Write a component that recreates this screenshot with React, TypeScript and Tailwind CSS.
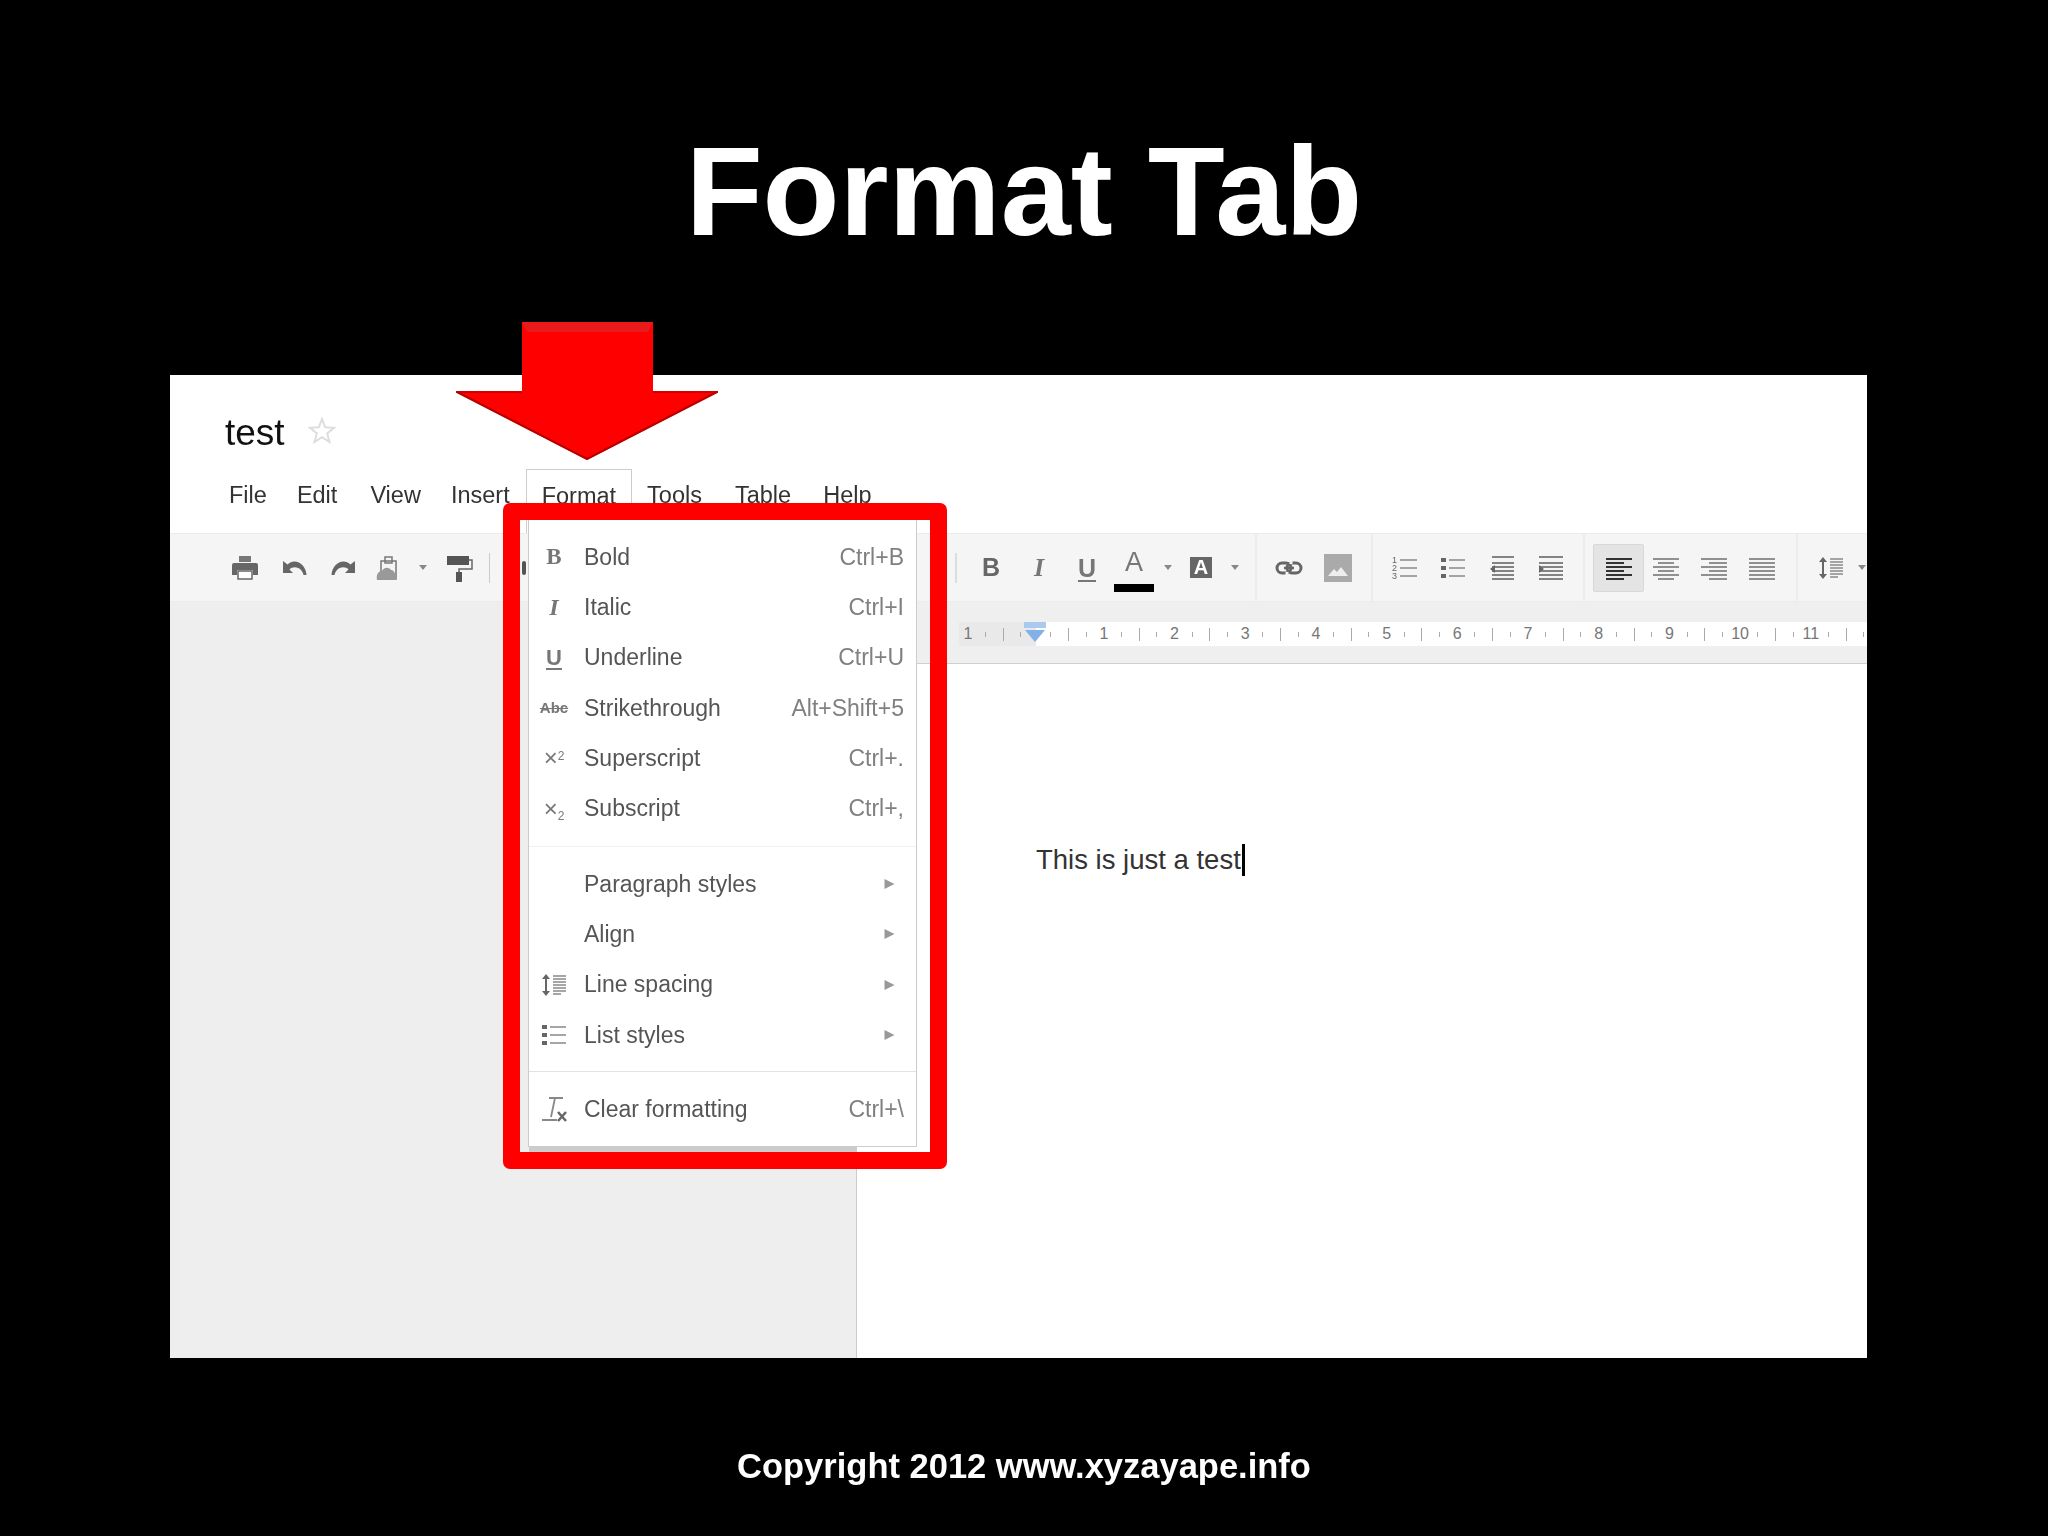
import React from "react";

const Ico = ({ children, className = "" }: { children: React.ReactNode; className?: string }) => (
  <svg viewBox="0 0 28 28" className={`w-[28px] h-[28px] shrink-0 block ${className}`} fill="#666">
    {children}
  </svg>
);

const Dd = ({ className = "" }: { className?: string }) => (
  <svg viewBox="0 0 10 6" className={`w-[10px] h-[6px] shrink-0 ${className}`}>
    <path d="M1 0h8L5 5z" fill="#888" />
  </svg>
);

const Sep = ({ className = "" }: { className?: string }) => <div className={`w-[2px] shrink-0 ${className}`} />;

const lines = (ys: number[], x1: number, x2: number, color = "#777", w = 2) =>
  ys.map((y) => <path key={y} d={`M${x1} ${y}H${x2}`} stroke={color} strokeWidth={w} fill="none" />);

const Undo = ({ flip = false }: { flip?: boolean }) => (
  <Ico>
    <path
      transform={flip ? "translate(28 0) scale(-1 1)" : undefined}
      d="M2 9v10h10l-3.5-3.5C11 12.500 17 12.500 20 16c1.300 1.500 2 3 2.500 5h3C25 13 19.500 7.500 13.500 7.500 11 7.500 8.500 8.500 6.500 10.500L2 7z"
    />
  </Ico>
);

const LineSpacing = () => (
  <Ico>
    <path d="M6 3l-4 5h3v12H2l4 5 4-5H7V8h3z" fill="#666" />
    {lines([5, 8, 11, 14, 17, 20], 13, 26, "#888", 1.500)}
    <path d="M13 23h8" stroke="#888" strokeWidth={1.500} />
  </Ico>
);

const BulletList = () => (
  <Ico>
    <rect x="2" y="4" width="5" height="4" fill="#666" />
    <rect x="2" y="12" width="5" height="4" fill="#666" />
    <rect x="2" y="20" width="5" height="4" fill="#666" />
    {lines([6, 14, 22], 10, 26, "#888", 1.500)}
  </Ico>
);

const Ticks = () => (
  <>
    <div className="w-[17.675px] flex justify-center"><div className="w-px h-[5px] bg-[#aaa]" /></div>
    <div className="w-[17.675px] flex justify-center"><div className="w-px h-[13px] bg-[#aaa]" /></div>
    <div className="w-[17.675px] flex justify-center"><div className="w-px h-[5px] bg-[#aaa]" /></div>
  </>
);

const Inch = ({ label }: { label: string }) => (
  <div className="flex shrink-0 items-center h-full">
    <div className="w-[17.675px] text-center text-[16px] leading-[24px] text-[#777]">{label}</div>
    <Ticks />
  </div>
);

const Row = ({ icon, label, right, arrow }: { icon?: React.ReactNode; label: string; right?: string; arrow?: boolean }) => (
  <div className="h-[50.3px] flex items-center shrink-0">
    <div className="w-[50px] flex justify-center items-center shrink-0">{icon}</div>
    <div className="ml-[5px] flex-1 text-[23px] text-[#555]">{label}</div>
    {right && <div className="pr-[12px] text-[23px] text-[#808080]">{right}</div>}
    {arrow && (
      <svg viewBox="0 0 10 10" className="w-[11px] h-[10px] mr-[21px]">
        <path d="M0 0l10 5-10 5z" fill="#999" />
      </svg>
    )}
  </div>
);

export default function App() {
  return (
    <div className="relative w-[2048px] h-[1536px] bg-black overflow-hidden font-['Liberation_Sans',sans-serif]">
      <div className="h-[375px] pt-[107px] text-center text-white font-bold text-[126px] leading-[170px] blur-[0.5px]">
        Format Tab
      </div>

      <div className="relative ml-[170px] w-[1697px] h-[983px] overflow-hidden bg-white">
        <div className="flex flex-col h-full blur-[0.5px]">
          {/* header */}
          <div className="h-[158px] shrink-0 flex flex-col">
            <div className="h-[94px] pl-[55px] pt-[36px] flex items-start">
              <span className="text-[37px] leading-[44px] text-[#111]">test</span>
              <svg viewBox="0 0 28 28" className="w-[28px] h-[28px] ml-[23px] mt-[6px]">
                <path d="M14 2l3.200 8.300 8.800.5-6.800 5.600 2.300 8.600L14 20.200 6.500 25l2.300-8.600L2 10.800l8.800-.5z" fill="none" stroke="#ddd" strokeWidth={2} />
              </svg>
            </div>
            <div className="h-[64px] pl-[44px] flex text-[23.500px] leading-[28px] text-[#333]">
              <div className="px-[15px] pt-[12px]">File</div>
              <div className="px-[15px] pt-[12px] mr-[3px]">Edit</div>
              <div className="px-[15px] pt-[12px]">View</div>
              <div className="px-[15px] pt-[12px]">Insert</div>
              <div className="px-[15px] pt-[12px] ml-[1px] border border-[#ccc] border-b-0">Format</div>
              <div className="px-[15px] pt-[12px]">Tools</div>
              <div className="px-[15px] pt-[12px] ml-[3px]">Table</div>
              <div className="px-[15px] pt-[12px] ml-[2px]">Help</div>
            </div>
          </div>

          {/* toolbar */}
          <div className="h-[69px] shrink-0 bg-[#f5f5f5] border-t border-[#ececec] border-b flex items-center pl-[61px]">
            <Ico>
              <path d="M8 2h12v6H8z" fill="#777" />
              <path d="M3 9h22a2 2 0 0 1 2 2v10h-5v-5H6v5H1V11a2 2 0 0 1 2-2z" />
              <rect x="7" y="17" width="14" height="8" fill="#fff" stroke="#666" strokeWidth="1.500" />
            </Ico>
            <div className="ml-[22px]"><Undo /></div>
            <div className="ml-[20px]"><Undo flip /></div>
            <Ico className="ml-[17px]">
              <path d="M7 7h15v18H7z" fill="none" stroke="#777" strokeWidth="1.500" />
              <rect x="11" y="3" width="7" height="6" fill="none" stroke="#777" strokeWidth="1.500" />
              <path d="M3 26c-1-5 1-9 5-9 2-4 7-4 9-1 2 0 5 2 5 10z" fill="#999" />
            </Ico>
            <Dd className="ml-[16px]" />
            <Ico className="ml-[17px]">
              <rect x="2" y="2" width="22" height="9" fill="#555" />
              <path d="M24 6h3v9H14v4" fill="none" stroke="#666" strokeWidth="1.500" />
              <rect x="11" y="18" width="6" height="10" fill="#555" />
            </Ico>
            <Sep className="ml-[16px] w-px h-[30px] bg-[#ccc]" />
            <div className="ml-[32px] w-[4px] h-[14px] bg-[#555] rounded-full" />
            <Sep className="ml-[429px] h-[30px] bg-[#ddd]" />
            <div className="ml-[20px] w-[28px] text-center font-bold text-[25px] text-[#666]">B</div>
            <div className="ml-[20px] w-[28px] text-center font-bold italic text-[26px] text-[#777] font-['Liberation_Serif',serif]">I</div>
            <div className="ml-[20px] w-[28px] text-center text-[25px] leading-[30px] font-bold text-[#777] underline underline-offset-[3px]">U</div>
            <div className="ml-[13px] w-[40px] h-[48px] flex flex-col items-center relative mt-[3px]">
              <div className="text-[27px] leading-[34px] text-[#777]">A</div>
              <div className="w-[40px] h-[8px] mt-[5px] bg-black" />
            </div>
            <Dd className="ml-[9px]" />
            <div className="ml-[17px] w-[22px] h-[21px] bg-[#666] text-white font-bold text-[20px] leading-[21px] text-center">A</div>
            <Dd className="ml-[18px]" />
            <Sep className="ml-[15px] h-[68px] bg-[#ececec]" />
            <Ico className="ml-[18px]">
              <rect x="2" y="9" width="14" height="10" rx="5" fill="none" stroke="#666" strokeWidth="3" />
              <rect x="12" y="9" width="14" height="10" rx="5" fill="none" stroke="#666" strokeWidth="3" />
              <path d="M9 14h10" stroke="#666" strokeWidth="2.500" />
              <path d="M16 7v3M12 18v3" stroke="#f5f5f5" strokeWidth="3" />
            </Ico>
            <Ico className="ml-[21px]">
              <rect width="28" height="28" fill="#aaa" />
              <path d="M4 22l6-7 3 3 4-5 7 9z" fill="#eee" />
            </Ico>
            <Sep className="ml-[19px] h-[68px] bg-[#ececec]" />
            <Ico className="ml-[18px]">
              <text x="1" y="9" fontSize="9" fill="#666" fontFamily="Liberation Sans">1</text>
              <text x="1" y="17" fontSize="9" fill="#666" fontFamily="Liberation Sans">2</text>
              <text x="1" y="25" fontSize="9" fill="#666" fontFamily="Liberation Sans">3</text>
              {lines([6, 14, 22], 9, 26, "#888", 1.500)}
            </Ico>
            <div className="ml-[20px]"><BulletList /></div>
            <Ico className="ml-[21px]">
              {lines([3, 9, 13, 17, 21, 25], 4, 26, "#777", 1.800)}
              <path d="M7 11v8l-5-4z" fill="#666" />
            </Ico>
            <Ico className="ml-[21px]">
              {lines([3, 9, 13, 17, 21, 25], 2, 26, "#777", 1.800)}
              <path d="M2 11v8l5-4z" fill="#666" />
            </Ico>
            <Sep className="ml-[18px] h-[68px] bg-[#ececec]" />
            <div className="ml-[8px] w-[51px] h-[48px] rounded-[2px] bg-[#e4e4e4] border border-[#d8d8d8] flex items-center justify-center">
              <Ico>
                {lines([5, 13, 21], 1, 27, "#333", 2)}
                {lines([9, 17, 25], 1, 19, "#333", 2)}
              </Ico>
            </div>
            <Ico className="ml-[8px]">
              {lines([5, 13, 21], 1, 27, "#777", 1.600)}
              {lines([9, 17, 25], 6, 22, "#777", 1.600)}
            </Ico>
            <Ico className="ml-[20px]">
              {lines([5, 13, 21], 1, 27, "#777", 1.600)}
              {lines([9, 17, 25], 9, 27, "#777", 1.600)}
            </Ico>
            <Ico className="ml-[20px]">
              {lines([5, 9, 13, 17, 21, 25], 1, 27, "#777", 1.600)}
            </Ico>
            <Sep className="ml-[20px] h-[68px] bg-[#ececec]" />
            <div className="ml-[19px]"><LineSpacing /></div>
            <Dd className="ml-[12px]" />
          </div>

          {/* workspace */}
          <div className="flex flex-1 min-h-0">
            <div className="w-[687px] shrink-0 bg-[#eeeeee] border-r border-[#cccccc]" />
            <div className="flex-1 flex flex-col bg-white">
              <div className="h-[62px] shrink-0 bg-[#efefef] border-b border-[#cfcfcf] pt-[20px] pl-[102px]">
                <div className="relative flex h-[24px]">
                  <div className="w-[77px] h-full flex bg-[#e9e9e9] shrink-0"><Inch label="1" /></div>
                  <div className="flex-1 h-full flex items-center bg-white pl-[6px]">
                    <Ticks />
                    <Inch label="1" />
                    <Inch label="2" />
                    <Inch label="3" />
                    <Inch label="4" />
                    <Inch label="5" />
                    <Inch label="6" />
                    <Inch label="7" />
                    <Inch label="8" />
                    <Inch label="9" />
                    <Inch label="10" />
                    <Inch label="11" />
                  </div>
                  <svg viewBox="0 0 22 20" className="absolute left-[65px] top-0 w-[22px] h-[20px]">
                    <rect x="0" y="0" width="22" height="6" fill="#a9c9ee" />
                    <path d="M1 8h20L11 20z" fill="#84b0e8" />
                  </svg>
                </div>
              </div>
              <div className="pl-[179px] pt-[180px] flex items-center text-[27.500px] leading-[32px] text-[#333]">
                <span>This is just a test</span>
                <span className="w-[3px] h-[32px] ml-[1px] bg-black" />
              </div>
            </div>
          </div>
        </div>

        {/* dropdown */}
        <div className="absolute left-[358px] top-[140px] w-[389px] h-[632px] blur-[0.5px] bg-white border border-[#cccccc] flex flex-col pt-[16px]">
          <Row label="Bold" right="Ctrl+B" icon={<span className="font-bold text-[23px] text-[#777] font-['Liberation_Serif',serif]">B</span>} />
          <Row label="Italic" right="Ctrl+I" icon={<span className="font-bold italic text-[24px] text-[#777] font-['Liberation_Serif',serif]">I</span>} />
          <Row label="Underline" right="Ctrl+U" icon={<span className="font-bold text-[22px] text-[#777] underline underline-offset-[3px]">U</span>} />
          <Row label="Strikethrough" right="Alt+Shift+5" icon={<span className="font-bold text-[15px] text-[#777] line-through">Abc</span>} />
          <Row label="Superscript" right="Ctrl+." icon={<span className="text-[24px] text-[#777]">×<sup className="text-[12px]">2</sup></span>} />
          <Row label="Subscript" right="Ctrl+," icon={<span className="text-[24px] text-[#777]">×<sub className="text-[12px]">2</sub></span>} />
          <div className="h-[25px] shrink-0 flex items-center"><div className="w-full h-px bg-[#f2f2f2]" /></div>
          <Row label="Paragraph styles" arrow />
          <Row label="Align" arrow />
          <Row label="Line spacing" arrow icon={<LineSpacing />} />
          <Row label="List styles" arrow icon={<BulletList />} />
          <div className="h-[24px] shrink-0 flex items-center"><div className="w-full h-px bg-[#e2e2e2]" /></div>
          <Row
            label="Clear formatting"
            right="Ctrl+\"
            icon={
              <Ico>
                <path d="M9 3h14M15 3l-4 19M2 25h15" stroke="#888" strokeWidth="1.800" fill="none" />
                <path d="M18 17l8 9M26 17l-8 9" stroke="#666" strokeWidth="2.500" fill="none" />
              </Ico>
            }
          />
          <div className="absolute left-0 bottom-[-6px] w-[328px] h-[5px] bg-[#cccccc]" />
        </div>
      </div>

      <div className="pt-[85px] text-center text-white font-bold text-[34.500px] leading-[46px] blur-[0.3px]">
        Copyright 2012 www.xyzayape.info
      </div>

      {/* red callouts */}
      <svg viewBox="0 0 262 138" className="absolute left-[456px] top-[322px] w-[262px] h-[138px] blur-[0.5px]">
        <path d="M66 0H197V70H262L131 138 0 70H66z" fill="#ff0000" />
        <path d="M66 0H197L192 10H71z" fill="#ea1a1a" />
        <path d="M0 70H66M197 70H262" stroke="#d40000" strokeWidth="2" fill="none" />
        <path d="M1 70L131 137 261 70" stroke="#b80000" strokeWidth="2" fill="none" />
      </svg>
      <div className="absolute left-[503px] top-[503px] w-[444px] h-[666px] border-[17px] border-[#ff0000] rounded-[7px]" />
    </div>
  );
}
